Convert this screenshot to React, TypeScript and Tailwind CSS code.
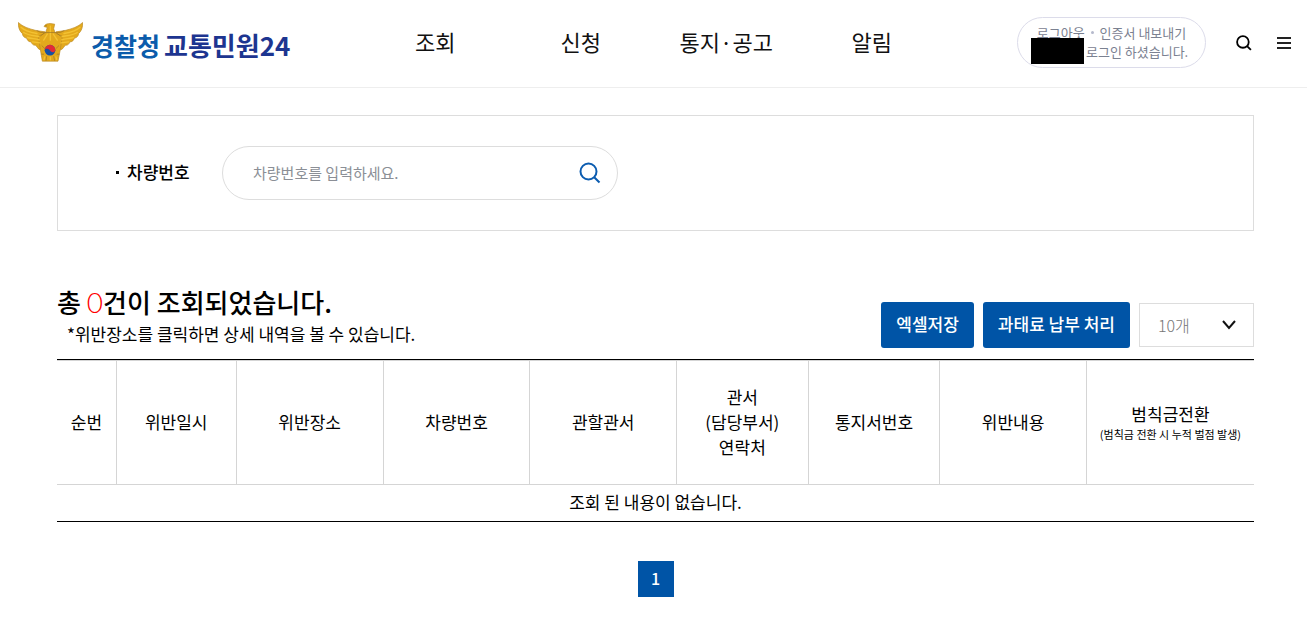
import { useState } from 'react';
import type { ReactNode } from 'react';

const NAV_ITEMS = ['조회', '신청', '통지·공고', '알림'];

type Column = {
  key: string;
  width: string;
  label: ReactNode;
};

const COLUMNS: Column[] = [
  { key: 'no', width: 'w-[5%]', label: '순번' },
  { key: 'date', width: 'w-[10%]', label: '위반일시' },
  { key: 'place', width: 'w-[12.3%]', label: '위반장소' },
  { key: 'car', width: 'w-[12.25%]', label: '차량번호' },
  { key: 'office', width: 'w-[12.25%]', label: '관할관서' },
  {
    key: 'contact',
    width: 'w-[11%]',
    label: (
      <>
        관서
        <br />
        (담당부서)
        <br />
        연락처
      </>
    ),
  },
  { key: 'notice', width: 'w-[11%]', label: '통지서번호' },
  { key: 'content', width: 'w-[12.25%]', label: '위반내용' },
  {
    key: 'convert',
    width: 'w-auto',
    label: (
      <>
        범칙금전환
        <span className="block text-[11px] leading-4">(범칙금 전환 시 누적 벌점 발생)</span>
      </>
    ),
  },
];

const Emblem = () => (
  <svg className="h-10 w-[65px] shrink-0" viewBox="54 68 195 119" aria-hidden="true">
    <g fill="#e3a91c" stroke="#b98a26" strokeWidth="2" strokeLinejoin="round">
      <path d="M55 69C68 82 88 88 108 93L135 97L140 130L121 151C112 148 112 140 106 137C99 138 96 133 93 127C85 127 82 122 80 116C72 115 68 109 67 102C59 96 54 82 55 69Z" />
      <path d="M248 69C235 82 215 88 195 93L168 97L162 130L182 151C191 148 191 140 197 137C204 138 207 133 210 127C218 127 221 122 223 116C231 115 235 109 236 102C244 96 249 82 248 69Z" />
      <path d="M132 81C135 74 143 72 151 72L164 74L161 88L166 101L187 110L181 150L174 185H127L121 150L115 110L136 101L142 84Z" />
    </g>
    <g fill="none" stroke="#f3c233" strokeWidth="4" strokeLinecap="round">
      <path d="M63 83C74 94 91 98 111 102M71 99C83 107 98 108 116 111M82 114C94 118 105 117 118 121M97 127L120 130" />
      <path d="M240 83C229 94 212 98 192 102M232 99C220 107 205 108 187 111M221 114C209 118 198 117 185 121M206 127L183 130" />
      <path d="M151 80V122M142 104L131 122M160 104L172 122M134 172L132 180M168 172L170 180M151 173V181" />
    </g>
    <g fill="none" stroke="#9b7428" strokeWidth="2">
      <path d="M110 93L122 99H181L193 93M121 110L132 101M182 110L170 101M125 138L135 148M177 138L167 148M140 170L138 184M161 170L164 184M124 164H132M170 164H178" />
    </g>
    <circle cx="150" cy="152" r="16" fill="#1551a4" />
    <path d="M134 152A16 16 0 0 1 166 152C164 160 154 160 150 153C146 146 136 147 134 152Z" fill="#e32b35" />
    <circle cx="138" cy="79" r="1.5" fill="#6b4b12" />
  </svg>
);

const SearchIcon = ({ className }: { className: string }) => (
  <svg className={className} viewBox="0 0 22 22" fill="none" stroke="currentColor" aria-hidden="true">
    <circle cx="9.5" cy="9.5" r="8" />
    <path d="M15.2 15.2L20.5 20.5" />
  </svg>
);

const Header = () => (
  <header className="grid h-22 grid-cols-[1fr_582px_1fr] border-b border-[#eeeeee]">
    <a href="#" className="flex items-start gap-2 pt-[22px] pl-[18px]">
      <Emblem />
      <span className="flex gap-1 pt-[3px] leading-10 font-bold whitespace-nowrap">
        <span className="text-[25px] text-[#0b5cab]">경찰청</span>
        <span className="text-[26px] text-[#1d3590]">교통민원24</span>
      </span>
    </a>
    <nav className="grid h-[82px] grid-cols-4 items-center text-center text-[22px] text-[#111111]">
      {NAV_ITEMS.map((item) => (
        <a key={item} href="#">
          {item}
        </a>
      ))}
    </nav>
    <div className="flex h-[85px] items-center justify-end pr-4">
      <div className="flex h-[51px] w-[189px] flex-col justify-center rounded-full border border-[#dcdcea] pb-[2px] text-[13px] leading-[19px] whitespace-nowrap text-[#7b8191]">
        <p className="flex items-center justify-center">
          <a href="#">로그아웃</a>
          <span className="mx-[6px] size-[3px] rounded-full bg-[#b5b9cc]" />
          <a href="#">인증서 내보내기</a>
        </p>
        <p className="flex h-[19px] items-center gap-[2px] pl-[13px]">
          <span className="h-[26px] w-[53px] bg-black" />
          로그인 하셨습니다.
        </p>
      </div>
      <button type="button" aria-label="검색" className="ml-[30px]">
        <SearchIcon className="size-4 stroke-[2.5]" />
      </button>
      <button type="button" aria-label="전체메뉴" className="ml-[25px]">
        <svg className="h-3 w-[14px]" viewBox="0 0 14 12" stroke="#222222" strokeWidth="2" aria-hidden="true">
          <path d="M0 1H14M0 6H14M0 11H14" />
        </svg>
      </button>
    </div>
  </header>
);

const SearchBox = () => {
  const [carNumber, setCarNumber] = useState('');

  return (
    <form
      className="flex h-[116px] items-center border border-[#dddddd] pl-[58px]"
      onSubmit={(e) => {
        e.preventDefault();
      }}
    >
      <label htmlFor="car-number" className="flex w-[106px] items-center gap-2 pb-[2px] text-[17px] font-medium">
        <span className="size-[3px] bg-black" />
        차량번호
      </label>
      <div className="flex h-[54px] w-[396px] items-center rounded-full border border-[#dddddd] pr-4 pl-[30px]">
        <input
          id="car-number"
          type="text"
          className="min-w-0 flex-1 text-[15px] outline-none placeholder:text-[#8b8f96]"
          placeholder="차량번호를 입력하세요."
          value={carNumber}
          onChange={(e) => setCarNumber(e.target.value)}
        />
        <button type="submit" aria-label="조회" className="text-[#0b5cb0]">
          <SearchIcon className="size-[22px] stroke-2" />
        </button>
      </div>
    </form>
  );
};

const ResultHeader = () => (
  <div className="mt-[53px] flex items-end justify-between pb-[11px]">
    <div className="pb-px">
      <h2 className="text-[26px] leading-9 font-medium">
        총 <span className="font-['Lato'] text-[28px] leading-none font-light text-[#ff0000]">0</span>건이 조회되었습니다.
      </h2>
      <p className="pl-[10px] text-[17px] leading-[27px]">*위반장소를 클릭하면 상세 내역을 볼 수 있습니다.</p>
    </div>
    <div className="flex items-center gap-[9px] text-[17px]">
      <button type="button" className="h-[46px] rounded-[3px] bg-[#0054a6] px-[15px] pb-[2px] font-medium text-white">
        엑셀저장
      </button>
      <button type="button" className="h-[46px] rounded-[3px] bg-[#0054a6] px-[15px] pb-[2px] font-medium text-white">
        과태료 납부 처리
      </button>
      <div className="relative">
        <select
          aria-label="목록 개수"
          className="h-11 w-[115px] appearance-none border border-[#dddddd] bg-white pl-[18px] text-base font-light text-[#777777]"
        >
          <option>10개</option>
          <option>20개</option>
          <option>50개</option>
        </select>
        <svg
          className="pointer-events-none absolute top-[17px] right-[18px] h-[10px] w-[14px]"
          viewBox="0 0 14 10"
          fill="none"
          stroke="#111111"
          strokeWidth="2"
          aria-hidden="true"
        >
          <path d="M1 1L7 8L13 1" />
        </svg>
      </div>
    </div>
  </div>
);

const ResultTable = () => (
  <div className="border-y border-black">
    <table className="w-full table-fixed border-separate border-spacing-0 text-center text-[17px] leading-[25px]">
      <thead>
        <tr>
          {COLUMNS.map(({ key, width, label }) => (
            <th
              key={key}
              scope="col"
              className={`${width} h-[125px] border-y border-r border-[#d5d5d5] pb-[2px] font-normal whitespace-nowrap last:border-r-0`}
            >
              {label}
            </th>
          ))}
        </tr>
      </thead>
      <tbody>
        <tr>
          <td colSpan={COLUMNS.length} className="h-9 pb-1">
            조회 된 내용이 없습니다.
          </td>
        </tr>
      </tbody>
    </table>
  </div>
);

export default function App() {
  return (
    <div className="min-h-screen bg-white font-['Noto_Sans_CJK_KR',sans-serif] text-black">
      <Header />
      <main className="pt-[27px] pr-[53px] pb-9 pl-[57px]">
        <SearchBox />
        <ResultHeader />
        <ResultTable />
        <nav aria-label="페이지" className="mt-[39px] flex justify-center">
          <a
            href="#"
            aria-current="page"
            className="grid size-9 place-items-center bg-[#0054a6] pb-[2px] font-medium text-white"
          >
            1
          </a>
        </nav>
      </main>
    </div>
  );
}
